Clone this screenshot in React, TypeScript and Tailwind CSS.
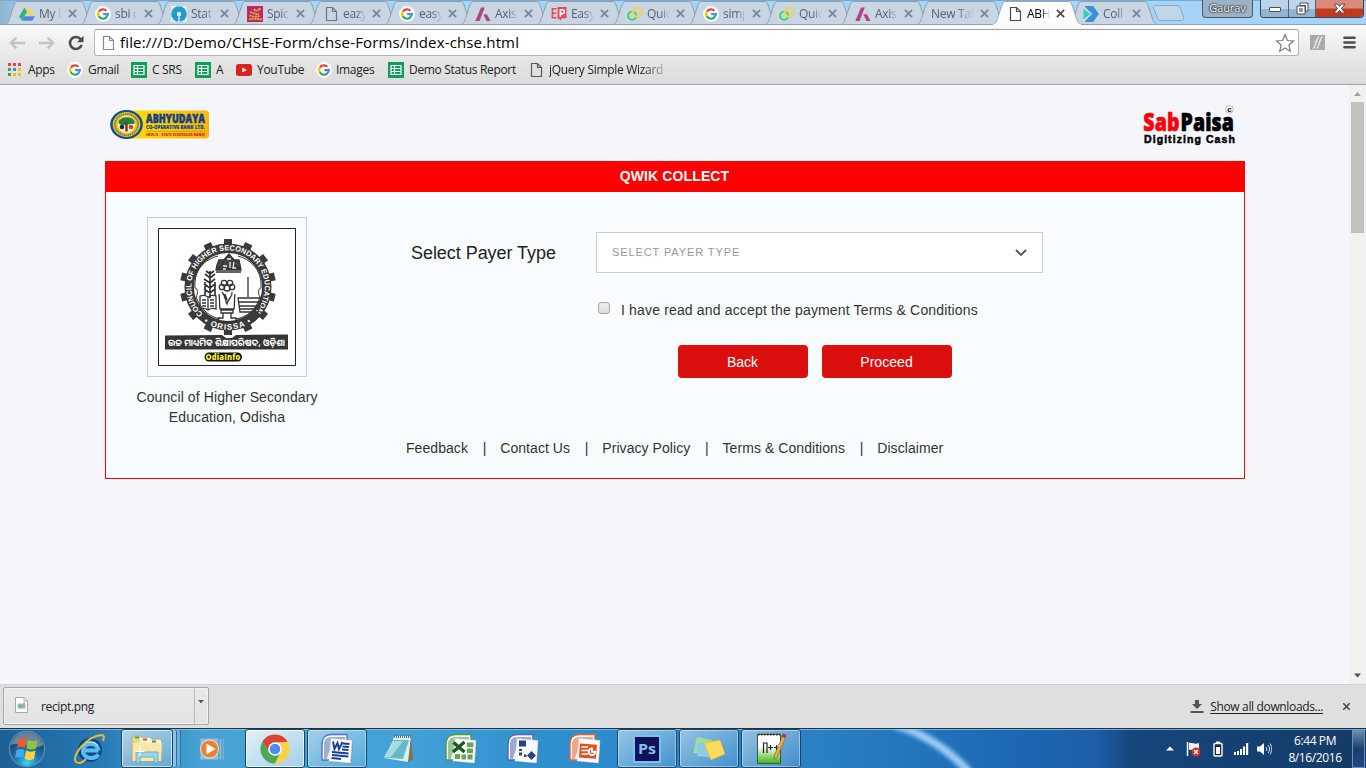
import React from "react";

type IconProps = { className?: string };

const UI = "font-['Open_Sans','Noto_Sans',sans-serif]";

/* ---------- favicons ---------- */

function DriveIcon() {
  return (
    <svg width="16" height="16" viewBox="0 0 16 16" className="opacity-80">
      <path d="M5.5 1.5h5L16 11h-5z" fill="#ffcf48" />
      <path d="M5.5 1.5 8 6 3 14.5 0 10.5z" fill="#11a861" />
      <path d="M5.3 10.2H16l-2.6 4.5H2.8z" fill="#3777e3" />
    </svg>
  );
}

function GoogleIcon() {
  return (
    <svg width="16" height="16" viewBox="0 0 16 16">
      <circle cx="8" cy="8" r="7.9" fill="#fff" />
      <g fill="none" strokeWidth="2.2">
        <path d="M11.4 4.7A4.8 4.8 0 0 0 3.9 5.6" stroke="#ea4335" />
        <path d="M3.9 5.5a4.8 4.8 0 0 0 0 5" stroke="#fbbc05" />
        <path d="M3.8 10.3a4.8 4.8 0 0 0 7.5 1.1" stroke="#34a853" />
        <path d="M11.2 11.5A4.8 4.8 0 0 0 12.8 8.2H8.2" stroke="#4285f4" />
      </g>
    </svg>
  );
}

function SbiIcon() {
  return (
    <svg width="16" height="16" viewBox="0 0 16 16">
      <path d="M0 0h16v16H0z" fill="#e4eef5" />
      <circle cx="8" cy="8" r="7.8" fill="#219dcb" />
      <circle cx="8" cy="8" r="2.2" fill="#e4eef5" />
      <path d="M7.3 9h1.4v7H7.3z" fill="#e4eef5" />
    </svg>
  );
}

function SpiceIcon() {
  return (
    <svg width="16" height="16" viewBox="0 0 16 16">
      <path d="M0 0h16v16H0z" fill="#bb2a63" />
      <g stroke="#e2b53c" strokeWidth="1.7" strokeDasharray="2.200 .5" fill="none">
        <path d="M7 3c1 2 4 2 5.500.5" />
        <path d="M3 6c2 0 5 2.500 9 2" />
        <path d="M2.500 9.500c3 1 6 1.500 10 .5" />
        <path d="M2 13.500c3-1 6-1 13 0" />
      </g>
      <circle cx="12.500" cy="3" r="1.200" fill="#e2b53c" />
    </svg>
  );
}

function PageIcon({ className = "" }: IconProps) {
  return (
    <svg width="16" height="16" viewBox="0 0 16 16" className={className}>
      <path
        d="M3.500 1.500h6l4 4v9h-10zM9.500 1.500v4h4"
        fill="none"
        stroke="currentColor"
        strokeWidth="1.200"
      />
    </svg>
  );
}

function AxisIcon() {
  return (
    <svg width="16" height="16" viewBox="0 0 16 16">
      <path d="M6 1.500h3.800L4.500 15H.3z" fill="#b3447f" />
      <path d="M8.300 8.300h3.600L15.600 15h-4.100z" fill="#b3447f" />
    </svg>
  );
}

function EpIcon() {
  return (
    <svg width="17" height="16" viewBox="0 0 17 16">
      <path d="M7 .5h9.500v12H11V15l-4-2.500z" fill="#ef4557" />
      <path d="M6 2.500H1.500v9.500H6M1.500 7.200h4" fill="none" stroke="#ef4557" strokeWidth="1.700" />
      <path d="M10 11V3.500h2.200a1.900 1.900 0 0 1 0 4H10" fill="none" stroke="#fff" strokeWidth="1.800" />
    </svg>
  );
}

function RingsIcon() {
  return (
    <svg width="17" height="16" viewBox="0 0 17 16">
      <circle cx="5.500" cy="9.800" r="4.300" fill="none" stroke="#3bd45e" strokeWidth="2" />
      <circle cx="10.800" cy="5.900" r="4.700" fill="none" stroke="#f0d44a" strokeWidth="2.200" />
    </svg>
  );
}

function CollectIcon() {
  return (
    <svg width="16" height="16" viewBox="0 0 16 16">
      <path d="M1.500 0H10l6 8-6 8H1.500L8 8z" fill="#3c8fd8" />
      <path d="M.5 2.500 7 8 .5 13.500z" fill="#36cfb5" />
      <path d="M.5 1 9 8 .5 15" fill="none" stroke="#dce8f3" strokeWidth=".9" />
    </svg>
  );
}

function SheetIcon() {
  return (
    <svg width="16" height="16" viewBox="0 0 16 16">
      <path d="M0 0h16v16H0z" fill="#0f9d58" />
      <path d="M3 3.500h10v9H3zM3 6.500h10M3 9.500h10M6.500 3.500v9" fill="none" stroke="#fff" strokeWidth="1.200" />
    </svg>
  );
}

function YouTubeIcon() {
  return (
    <svg width="16" height="16" viewBox="0 0 16 16">
      <rect x="0" y="2" width="16" height="12" rx="2.500" fill="#d8231f" />
      <path d="M6.300 5.500v5L10.800 8z" fill="#fff" />
    </svg>
  );
}

function AppsIcon() {
  const colors = ["#ea4335", "#ea4335", "#ea4335", "#34a853", "#4285f4", "#fbbc05", "#34a853", "#fbbc05", "#fbbc05"];
  return (
    <svg width="14" height="14" viewBox="0 0 14 14">
      {colors.map((c, i) => (
        <rect key={i} x={(i % 3) * 5} y={Math.floor(i / 3) * 5} width="3" height="3" fill={c} />
      ))}
    </svg>
  );
}

function CrossIcon({ className = "" }: IconProps) {
  return (
    <svg width="9" height="9" viewBox="0 0 9 9" className={className}>
      <path d="M.9.9l7.200 7.200M8.100.9.9 8.100" stroke="currentColor" strokeWidth="1.700" />
    </svg>
  );
}

/* ---------- browser chrome ---------- */

type TabData = { title: string; icon?: React.ReactNode; active?: boolean };

const tabs: TabData[] = [
  { title: "My D", icon: <DriveIcon /> },
  { title: "sbi c", icon: <GoogleIcon /> },
  { title: "Stat", icon: <SbiIcon /> },
  { title: "Spic", icon: <SpiceIcon /> },
  { title: "eazy", icon: <PageIcon className="text-[#6d757d]" /> },
  { title: "easy", icon: <GoogleIcon /> },
  { title: "Axis", icon: <AxisIcon /> },
  { title: "Easy", icon: <EpIcon /> },
  { title: "Quic", icon: <RingsIcon /> },
  { title: "simp", icon: <GoogleIcon /> },
  { title: "Quic", icon: <RingsIcon /> },
  { title: "Axis", icon: <AxisIcon /> },
  { title: "New Tab" },
  { title: "ABH", icon: <PageIcon className="text-[#4a4a4a]" />, active: true },
  { title: "Coll", icon: <CollectIcon /> },
];

function Tab({ title, icon, active }: TabData) {
  return (
    <div className={`relative h-[25px] w-[76px] shrink-0 ${active ? "z-10" : ""}`}>
      <svg width="86" height="25" viewBox="0 0 86 25" className="absolute left-0 top-0 overflow-visible">
        <path
          d="M-.5 24.500C3 24 3.500 21 5 17L9 5C10 2 11 1.500 13 1.500h62c2 0 3 .5 4 3.500l4 12c1.500 4 2 7 5.500 7.500z"
          fill={active ? "#fcfcfc" : "#c8d6e4"}
          stroke={active ? "#9aa9b8" : "#8e9fb1"}
          strokeWidth="1"
        />
        {active && <path d="M0 25.500h88V24H0z" fill="#fbfbfb" />}
      </svg>
      <div className="relative flex h-full items-center pl-[14px] pt-[2px]">
        {icon && <span className="mr-[4px] flex w-[16px] shrink-0">{icon}</span>}
        <span
          className={`${icon ? "w-[23px]" : "w-[43px]"} shrink-0 overflow-hidden whitespace-nowrap text-[12px] tracking-[-0.3px] [mask-image:linear-gradient(to_right,black_60%,transparent)] ${
            active ? "text-black" : "text-[#59626b]"
          }`}
        >
          {title}
        </span>
        <CrossIcon className={`ml-[6px] shrink-0 ${active ? "text-[#4c4c4c]" : "text-[#7a848f]"}`} />
      </div>
    </div>
  );
}

function WindowControls() {
  return (
    <div className="ml-auto flex items-start">
      <div className="mr-[7px] flex h-[18px] w-[51px] items-center justify-center rounded-b-[4px] border border-t-0 border-[#47586a] bg-[#9bb1c6] text-[11px] tracking-[-0.1px] text-white [text-shadow:0_0_2px_#222,0_0_2px_#222,0_0_1px_#222]">
        Gaurav
      </div>
      <div className="mr-[2px] flex h-[18px] overflow-hidden rounded-b-[4px] border border-t-0 border-[#33485c]">
        <div className="flex w-[28px] items-center justify-center border-r border-[#4d6479] bg-linear-to-b from-[#bdd5ea] from-50% to-[#93b3cf] to-55%">
          <svg width="14" height="8" viewBox="0 0 14 8"><rect x="1.500" y="2.500" width="11" height="4" rx=".5" fill="#fff" stroke="#48525d" /></svg>
        </div>
        <div className="flex w-[27px] items-center justify-center border-r border-[#4d6479] bg-linear-to-b from-[#bdd5ea] from-50% to-[#93b3cf] to-55%">
          <svg width="13" height="13" viewBox="0 0 13 13">
            <path d="M4 1h8v8H9.500V3.500H4z" fill="#fff" stroke="#48525d" />
            <path d="M1 4h8v8H1z" fill="#fff" stroke="#48525d" />
            <path d="M3.700 6.700h2.600v2.600H3.700z" fill="#9fbad2" stroke="#48525d" strokeWidth=".8" />
          </svg>
        </div>
        <div className="flex w-[47px] items-center justify-center bg-linear-to-b from-[#d98a7a] from-45% to-[#c13a20] to-55%">
          <svg width="13" height="11" viewBox="0 0 13 11">
            <path d="M1 1h3.500l2 2.500L8.500 1H12L8.500 5.500 12 10H8.500l-2-2.500-2 2.500H1l3.500-4.500z" fill="#fff" stroke="#5a4648" />
          </svg>
        </div>
      </div>
    </div>
  );
}

function TabStrip() {
  return (
    <div className="flex h-[25px] shrink-0 border-b border-[#8e9fb1] bg-linear-to-r from-[#8fb6cf] to-[#a6d3f8] to-3% pl-[5px] shadow-[inset_0_1px_0_#79aad4]">
      {tabs.map((t, i) => (
        <Tab key={i} {...t} />
      ))}
      <svg width="36" height="25" viewBox="0 0 36 25" className="ml-[5px] overflow-visible">
        <path d="M5 5.500h22c2 0 3 1 3.500 2.500l3 9c.7 2-.2 3.500-2 3.500H11c-2 0-3-1-3.700-3L3.500 8C3 6.500 3.500 5.500 5 5.500z" fill="#bfd5ea" stroke="#8fa6bd" />
      </svg>
      <WindowControls />
    </div>
  );
}

function Toolbar() {
  return (
    <div className="flex h-[32px] shrink-0 items-center bg-linear-to-b from-[#fafafa] to-[#e7e7e7] pt-[3px]">
      <svg width="16" height="14" viewBox="0 0 16 14" className="ml-[9px]">
        <path d="M7.500 1.500 2 7l5.500 5.500M2 7h14" fill="none" stroke="#c3c3c3" strokeWidth="2.400" />
      </svg>
      <svg width="16" height="14" viewBox="0 0 16 14" className="ml-[14px]">
        <path d="M8.500 1.500 14 7l-5.500 5.500M14 7H0" fill="none" stroke="#c3c3c3" strokeWidth="2.400" />
      </svg>
      <svg width="16" height="16" viewBox="0 0 16 16" className="ml-[13px]">
        <path d="M12.800 4.400A6 6 0 1 0 13.600 10" fill="none" stroke="#4c4c4c" strokeWidth="2.600" />
        <path d="M15.500.8v6.400H9z" fill="#4c4c4c" />
      </svg>
      <div className="ml-[10px] flex h-[27px] w-[1205px] items-center rounded-[3px] border border-[#b5b5b5] border-t-[#a0a0a0] bg-white pl-[5px] pr-[3px]">
        <PageIcon className="text-[#8a8a8a]" />
        <span className="ml-[4px] text-[15px] leading-none tracking-[0.15px] text-black">
          file:///D:/Demo/CHSE-Form/chse-Forms/index-chse.html
        </span>
        <svg width="20" height="20" viewBox="0 0 20 20" className="ml-auto">
          <path d="M10 1.800l2.400 5.700 6.100.5-4.600 4 1.400 6.200-5.300-3.300-5.300 3.300 1.400-6.200-4.600-4 6.100-.5z" fill="#fff" stroke="#7d7d7d" strokeWidth="1.200" />
        </svg>
      </div>
      <svg width="15" height="15" viewBox="0 0 15 15" className="ml-[11px]">
        <path d="M0 0h15v15H0z" fill="#a9a9a9" />
        <path d="M3 13.500C6 12 5.500 4 9 1.500M6.500 13.500C9.500 12 9 4 12.500 1.500" fill="none" stroke="#f6f6f6" strokeWidth="1.100" />
        <path d="M4 6.300h8M3.500 9h7.500" stroke="#d5d5d5" strokeWidth=".7" />
      </svg>
      <svg width="13" height="13" viewBox="0 0 13 13" className="ml-[18px]">
        <path d="M1.500 1.700h10M1.500 6.500h10M1.500 11.300h10" stroke="#4c4c4c" strokeWidth="2.600" strokeLinecap="round" />
      </svg>
    </div>
  );
}

function BookmarksBar() {
  return (
    <div className="flex h-[28px] shrink-0 items-center border-b border-[#a3a3a3] bg-linear-to-b from-[#e6e6e6] to-[#dcdcdc] pb-px pl-[8px] text-[12px] tracking-[-0.3px] text-[#222]">
      <AppsIcon />
      <span className="ml-[6px] w-[39px]">Apps</span>
      <GoogleIcon />
      <span className="ml-[5px] w-[43px]">Gmail</span>
      <SheetIcon />
      <span className="ml-[5px] w-[43px]">C SRS</span>
      <SheetIcon />
      <span className="ml-[5px] w-[20px]">A</span>
      <YouTubeIcon />
      <span className="ml-[5px] w-[59px] tracking-[-0.3px]">YouTube</span>
      <GoogleIcon />
      <span className="ml-[4px] w-[52px]">Images</span>
      <SheetIcon />
      <span className="ml-[5px] w-[119px] whitespace-nowrap tracking-[-0.33px]">Demo Status Report</span>
      <PageIcon className="text-[#5a5a5a]" />
      <span className="ml-[5px] w-[116px] overflow-hidden whitespace-nowrap [mask-image:linear-gradient(to_right,black_80%,rgba(0,0,0,.25))]">
        jQuery Simple Wizard
      </span>
    </div>
  );
}

/* ---------- web page ---------- */

function BankLogo() {
  return (
    <svg width="100" height="30" viewBox="0 0 100 30">
      <defs>
        <linearGradient id="gold" x1="0" y1="0" x2="1" y2="0">
          <stop offset="0" stopColor="#ffe100" />
          <stop offset="1" stopColor="#f7b515" />
        </linearGradient>
      </defs>
      <rect x="14" y=".5" width="85" height="28" rx="3.500" fill="url(#gold)" />
      <ellipse cx="16.500" cy="14.500" rx="16.300" ry="14.500" fill="#0d4c9b" />
      <ellipse cx="16.500" cy="14.500" rx="13.800" ry="12.400" fill="#e9c522" />
      <ellipse cx="16.500" cy="14.500" rx="11.500" ry="10.600" fill="none" stroke="#6f7045" strokeWidth="1.800" strokeDasharray="1.300 .8" />
      <ellipse cx="16.500" cy="14.500" rx="8.800" ry="8.500" fill="#f1ead4" />
      <path d="M8.500 12.500c0-6 14-7.500 16-1 1 3-2 3-3 2-2 2-4 0-5 1-2 1-7 1-8-2z" fill="#22803b" />
      <path d="M15.300 12h2.400v9.500h-2.400z" fill="#6b3a1d" />
      <circle cx="12" cy="17" r="2.300" fill="#2a2a2a" />
      <circle cx="21" cy="17" r="2.300" fill="#b9522b" />
      <g fontFamily="Open Sans, sans-serif" fontWeight="800">
        <text x="36" y="12.600" fontSize="12" fill="#123f8c" stroke="#123f8c" strokeWidth=".6" textLength="59" lengthAdjust="spacingAndGlyphs">ABHYUDAYA</text>
        <text x="36" y="18.900" fontSize="5.200" fill="#123f8c" stroke="#123f8c" strokeWidth=".15" textLength="59" lengthAdjust="spacingAndGlyphs">CO-OPERATIVE BANK LTD.</text>
        <text x="36" y="26.200" fontSize="4.200" fill="#d8241c" stroke="#d8241c" strokeWidth=".1" textLength="59" lengthAdjust="spacingAndGlyphs">(MULTI - STATE SCHEDULED BANK)</text>
      </g>
      <path d="M36 21.200h59" stroke="#a39a2e" strokeWidth=".7" />
    </svg>
  );
}

function SabPaisaLogo() {
  return (
    <svg width="96" height="44" viewBox="0 0 96 44">
      <g fontFamily="Open Sans, sans-serif" fontWeight="800" fontSize="25.500">
        <text x="1.300" y="28.300" fill="#fb0007" stroke="#fb0007" strokeWidth=".7" textLength="36.500" lengthAdjust="spacingAndGlyphs">Sab</text>
        <text x="38.500" y="28.300" fill="#000" stroke="#000" strokeWidth=".7" textLength="53.500" lengthAdjust="spacingAndGlyphs">Paisa</text>
      </g>
      <text x="2" y="40.300" fontFamily="Liberation Sans, sans-serif" fontWeight="700" fontSize="10.500" stroke="#000" strokeWidth=".5" textLength="91" lengthAdjust="spacing">Digitizing Cash</text>
      <circle cx="87.500" cy="6.300" r="3.800" fill="#fff" stroke="#888" strokeWidth=".6" />
      <text x="85.200" y="8.900" fontFamily="Liberation Sans, sans-serif" fontWeight="700" fontSize="8">c</text>
    </svg>
  );
}

function CouncilSeal() {
  const teeth = Array.from({ length: 14 }, (_, i) => (i * 360) / 14);
  return (
    <svg width="138" height="138" viewBox="0 0 138 138" fill="none">
      <path d="M.5.5h137v137H.5z" fill="#fff" stroke="#222" />
      {teeth.map((a) => (
        <path key={a} d="M66 11h8v10h-8z" fill="#3a3a3a" transform={`rotate(${a} 70 59)`} />
      ))}
      <circle cx="70" cy="59" r="38.800" fill="#fff" stroke="#3a3a3a" strokeWidth="9.500" />
      <path d="M60 28C42 33 36 46 37 60c3 0 3 6 1 9 5 13 14 20 24 22M80 28c17 5 24 18 23 32-3 0-3 6-1 9-4 13-13 20-24 22" stroke="#333" strokeWidth="1" />
      <defs>
        <path id="sealTop" d="M44.200 86.500A37.700 37.700 0 1 1 95.800 86.500" />
        <path id="sealBottom" d="M42 90.500A42.200 42.200 0 0 0 98 90.500" />
      </defs>
      <g fontFamily="Liberation Sans, sans-serif" fontWeight="700" fill="#fff">
        <text fontSize="7.600" dy="1"><textPath href="#sealTop" startOffset="0" textLength="176" lengthAdjust="spacingAndGlyphs">COUNCIL OF HIGHER SECONDARY EDUCATION</textPath></text>
        <text fontSize="8" dy=".5"><textPath href="#sealBottom" startOffset="5" textLength="50">• ORISSA •</textPath></text>
      </g>
      <g stroke="#333" strokeWidth="1.300">
        <path d="M61 32h20l1 5 1 5H58l1-5zM58 42l4-3h17l4 3M58 44h25" fill="#444" />
        <path d="M65 33l6-7 6 7v8H65z" fill="#444" />
        <path d="M65 38h4M65 41h3M72 34v6M76 34l-1 6h3M69 31h4" stroke="#eee" />
        <path d="M52 43v27M47 46l5 4 5-4M46 51l6 4 5-4M46 56l6 4 5-4M46 61l6 4 5-4M48 43l4 3 4-3M47 54v14M57 54v14" strokeWidth="1.700" />
        <path d="M42 68c3-1 5-1 8 1 3-2 5-2 8-1v13c-3-1-5-1-8 1-3-2-5-2-8-1zM50 69v13M44 72h4M44 75h4M44 78h4M52 72h4M52 75h4M52 78h4" />
        <circle cx="69" cy="60" r="3" />
        <circle cx="64" cy="59" r="2.700" />
        <circle cx="74" cy="59" r="2.700" />
        <circle cx="66" cy="55" r="2.700" />
        <circle cx="72" cy="55" r="2.700" />
        <path d="M61 66c1 5 0 8 1 15h14c1-7 0-10 1-15M64 64c4 4 3 9 5 12 1-6 6-7 5-12M67 66l2 6M63 82h12v3H63zM65 85v5H60v4h18v-4h-5v-5" />
        <path d="M90 49v20M80 70h24l-4 14H82zM81 74h21M81 78h20M82 81h18" />
      </g>
      <path d="M7 107.500 64 107l4 3h6l4-3 52-.5v15H7z" fill="#353535" />
      <text
        x="10"
        y="118"
        fontFamily="Noto Sans Oriya, Noto Sans, sans-serif"
        fontWeight="700"
        fontSize="9.500"
        fill="#fff"
        textLength="117"
        lengthAdjust="spacingAndGlyphs"
      >
        ଉଚ୍ଚ ମାଧ୍ୟମିକ ଶିକ୍ଷାପରିଷଦ, ଓଡ଼ିଶା
      </text>
      <rect x="46.500" y="124.500" width="37.500" height="9" rx="4.500" fill="#111" />
      <text x="47.500" y="131.900" fontFamily="Open Sans, sans-serif" fontWeight="800" fontSize="8" fill="#f4ee24" textLength="35" lengthAdjust="spacingAndGlyphs">OdiaInfo</text>
    </svg>
  );
}

const footerLinks = ["Feedback", "Contact Us", "Privacy Policy", "Terms & Conditions", "Disclaimer"];

function PaymentPage() {
  return (
    <main className="flex-1 overflow-hidden pl-[105px] font-['Liberation_Sans',Arial,sans-serif] text-[14px] leading-[20px] tracking-[0.16px] text-[#333]">
      <header className="flex h-[76px] w-[1140px] justify-between">
        <div className="pl-[5px] pt-[25px]"><BankLogo /></div>
        <div className="pr-[7px] pt-[18px]"><SabPaisaLogo /></div>
      </header>
      <section className="h-[318px] w-[1140px] border border-[#f00] bg-[#f9fcff]">
        <h1 className="h-[30px] bg-[#f00] pr-px text-center font-bold leading-[29px] tracking-[0.12px] text-white">QWIK COLLECT</h1>
        <div className="flex pt-[25px]">
          <aside className="flex w-[242px] flex-col items-center text-center">
            <div className="border border-[#ccc] p-[10px]"><CouncilSeal /></div>
            <p className="mt-[10px] w-[200px] tracking-[0.11px]">Council of Higher Secondary Education, Odisha</p>
          </aside>
          <form className="pl-[62px] pt-[15px]">
            <div className="flex items-center">
              <label className="w-[186px] pl-px text-[18px] tracking-[-0.05px] text-[#222]">Select Payer Type</label>
              <div className="flex h-[41px] w-[447px] items-center justify-between border border-[#ccc] bg-white pl-[15px] pr-[15px]">
                <span className="-mt-[2px] text-[11px] tracking-[0.9px] text-[#999]">SELECT PAYER TYPE</span>
                <svg width="12" height="8" viewBox="0 0 12 8"><path d="M1 1l5 5 5-5" fill="none" stroke="#555" strokeWidth="1.800" /></svg>
              </div>
            </div>
            <div className="mt-[27px] flex pl-[188px]">
              <span className="mt-[2px] h-[12px] w-[12px] rounded-[3px] border border-[#a8a8a8] bg-linear-to-b from-[#eee] to-[#dcdcdc]" />
              <span className="ml-[11px] text-[#333]">I have read and accept the payment Terms &amp; Conditions</span>
            </div>
            <div className="mt-[25px] flex gap-[14px] pl-[268px] text-white">
              <button type="button" className="h-[33px] w-[130px] rounded-[4px] bg-[#dc0f0f] pr-px pt-px tracking-normal">Back</button>
              <button type="button" className="h-[33px] w-[130px] rounded-[4px] bg-[#dc0f0f] pr-px pt-px tracking-[0.05px]">Proceed</button>
            </div>
          </form>
        </div>
        <nav className="mt-[11px] flex pl-[300px] tracking-[0.06px]">
          {footerLinks.map((link, i) => (
            <React.Fragment key={link}>
              {i > 0 && <span className="w-[32.250px] pl-px text-center">|</span>}
              <span>{link}</span>
            </React.Fragment>
          ))}
        </nav>
      </section>
    </main>
  );
}

function Scrollbar() {
  return (
    <div className="flex w-[17px] flex-col items-center bg-[#f1f1f1]">
      <svg width="17" height="17" viewBox="0 0 17 17"><path d="M5 11h7L8.500 7z" fill="#a3a3a3" /></svg>
      <div className="h-[131px] w-[13px] bg-[#c1c1c1]" />
      <svg width="17" height="17" viewBox="0 0 17 17" className="mt-auto"><path d="M5 6.500h7l-3.500 4z" fill="#505050" /></svg>
    </div>
  );
}

function DownloadShelf() {
  return (
    <div className="flex h-[44px] shrink-0 items-center border-t border-[#cfd1d2] bg-[#dfdfdf] pl-[3px] text-[12px] text-[#222]">
      <div className="mb-px flex h-[38px] w-[206px] rounded-[2px] border border-[#a5a5a5] bg-linear-to-b from-[#e9e9e9] to-[#e2e2e2] shadow-[inset_0_0_0_1px_#f2f2f2]">
        <div className="flex w-[191px] items-center border-r border-[#bbb] pl-[11px]">
          <svg width="13" height="16" viewBox="0 0 13 16" className="-mt-[2px]">
            <path d="M.5.5h8.500l3.500 3.500v11.500H.5z" fill="#fff" stroke="#a8a8a8" />
            <path d="M9 .5V4h3.500" fill="#eee" stroke="#a8a8a8" />
            <path d="M2 6.500h9v5.500H2z" fill="#d4e8f0" />
            <circle cx="5.500" cy="9" r="2.600" fill="#74bdc9" />
            <path d="M8 5.500h2v6H8z" fill="#e29a6a" />
            <path d="M4 8.500l3 2" stroke="#6b9d54" />
          </svg>
          <span className="ml-[13px] mt-[2px] tracking-[-0.35px]">recipt.png</span>
        </div>
        <svg width="12" height="26" viewBox="0 0 12 26"><path d="M3 12h6l-3 3.300z" fill="#555" /></svg>
      </div>
      <svg width="14" height="13" viewBox="0 0 14 13" className="ml-auto">
        <path d="M5 0h4v4h3L7 9 2 4h3zM.5 11h13v2H.5z" fill="#555" />
      </svg>
      <span className="ml-[6px] mt-px tracking-[-0.35px] underline underline-offset-2">Show all downloads...</span>
      <CrossIcon className="ml-[19px] mr-[15px] scale-90 text-[#444]" />
    </div>
  );
}

/* ---------- taskbar ---------- */

function StartOrb() {
  return (
    <svg width="38" height="38" viewBox="0 0 38 38">
      <defs>
        <radialGradient id="orb" cx=".5" cy=".9" r=".75">
          <stop offset="0" stopColor="#37d5f7" />
          <stop offset=".45" stopColor="#1c77b4" />
          <stop offset="1" stopColor="#1c3f63" />
        </radialGradient>
      </defs>
      <circle cx="19" cy="19" r="17.500" fill="url(#orb)" stroke="#5d8fae" strokeWidth="1.300" />
      <path d="M3 15A16.500 16.500 0 0 1 35 15C27 21 11 10 3 15z" fill="#fff" opacity=".35" />
      <path d="M11 9c3-1.500 5-1.500 7.500 0L17 18c-3-1.500-5-1.500-8 0z" fill="#ee5a24" />
      <path d="M20 10c3 1.500 6 1.500 9.500 0L28 18.500c-3 1.500-6 1.500-9.500 0z" fill="#8cc63f" />
      <path d="M8.500 20c3-1.500 5-1.500 8 0L15 28c-3-1.500-5-1.500-8 0z" fill="#3fa9f5" />
      <path d="M18 20.500c3 1.500 6 1.500 9.500 0L26 29c-3 1.500-6 1.500-9.500 0z" fill="#fdd33c" />
    </svg>
  );
}

function IeIcon() {
  return (
    <svg width="34" height="34" viewBox="0 0 34 34">
      <circle cx="18" cy="18" r="12" fill="#0c4a87" />
      <path d="M11 18.500h15.500M26.500 22.500a9 9 0 0 1-15.500-2C10 10 25 9 26.500 18.500" fill="none" stroke="#59bdf2" strokeWidth="4" />
      <path d="M11 14c3-5 11-6 15 0" fill="none" stroke="#c8edff" strokeWidth="1.200" />
      <path d="M4 30C-1 24 14 5 29 3c4 0 3 2 2 6M4 30c3 2 7 0 10-3" fill="none" stroke="#e9b933" strokeWidth="2" />
    </svg>
  );
}

function ExplorerIcon() {
  return (
    <svg width="32" height="30" viewBox="0 0 32 30">
      <path d="M1 4l2-2h7l2 3h18v22H1z" fill="#eed68a" stroke="#c09d45" strokeWidth=".6" />
      <path d="M9 4h10l2 2h9v3H9z" fill="#fff5cf" />
      <path d="M4 2.500h4v2H4z" fill="#2fb64a" />
      <path d="M12 4.500h4v2h-4z" fill="#d54c3c" />
      <path d="M21 6.500h4v2h-4z" fill="#3d7fe0" />
      <path d="M2 9h29l-1 18H2z" fill="#f9e7a8" />
      <path d="M5 18h22v11h-4v-6H9v6H5z" fill="#9fd5ea" stroke="#5b9fc0" strokeWidth=".8" />
      <path d="M9 13v9M4.500 17.500h9" stroke="#fff" strokeWidth="1" />
    </svg>
  );
}

function MediaIcon() {
  return (
    <svg width="30" height="26" viewBox="0 0 30 26">
      <path d="M2 2h24v22H2z" fill="#8cc4e2" stroke="#5a9dc5" />
      <path d="M21 2v22M24 2v22" stroke="#3d86b6" />
      <circle cx="11.500" cy="13" r="9" fill="#f0802a" stroke="#d9e9f2" />
      <path d="M8.500 7.500v11l9-5.500z" fill="#fff" />
    </svg>
  );
}

function ChromeIcon() {
  return (
    <svg width="30" height="30" viewBox="0 0 30 30">
      <circle cx="15" cy="15" r="14.500" fill="#fbd24a" />
      <path d="M2.440 7.750A14.500 14.500 0 0 1 27.560 7.750L15 8.500 9.400 18.300z" fill="#db4437" />
      <path d="M2.440 7.750A14.500 14.500 0 0 0 15 29.500L20.700 18.200 9.400 18.300z" fill="#4ba85a" />
      <path d="M27.560 7.750A14.500 14.500 0 0 1 15 29.500l5.700-11.300L20 8.500h7.900z" fill="#fbd24a" />
      <circle cx="15" cy="15" r="6.800" fill="#fff" />
      <circle cx="15" cy="15" r="5.300" fill="#4c8bf5" />
    </svg>
  );
}

function OfficeIcon({ color, children }: { color: string; children: React.ReactNode }) {
  return (
    <svg width="32" height="32" viewBox="0 0 32 32">
      <path d="M1 27V12C1 5 4 1.500 11 1.500h15V10L9 27z" fill="#f6f9fd" stroke={color} strokeWidth="1.400" />
      <path d="M3 26V12c0-5 2-8 8-8h13v3C14 9 8 15 6 26z" fill={color} opacity=".55" />
      <path d="M11 6.500 32 8.500 30.500 31 9 29z" fill="#3c5a78" opacity=".3" />
      <path d="M10 5.500 31 7.500 29.500 30 8 28z" fill="#fcfdff" stroke="#d3dae5" strokeWidth=".5" />
      {children}
    </svg>
  );
}

function WordIcon() {
  return (
    <OfficeIcon color="#5673b8">
      <path d="M12 8.500l1.500 7.500 3-6 1.500 6L21.500 9" fill="none" stroke="#1d3f93" strokeWidth="2" />
      <path d="M22 10.500l6.500.5M21.500 13.500l6.500.5M21 16.500l6.500.5M11 19l16.500 1.500M11 22l16.300 1.500M10.500 25l9.500 1" stroke="#1d3f93" strokeWidth="1.900" />
    </OfficeIcon>
  );
}

function ExcelIcon() {
  return (
    <OfficeIcon color="#4b9a3d">
      <path d="M22 9.500h6.500V14H22zM22 15.500h6V20h-6zM10 21h5v5h-5zM16.500 21.500H21v5h-4.500zM22.500 21.500h5v5h-5z" fill="#65a653" />
      <path d="M8.500 9.500l11 9.500M19.500 9 8 19" stroke="#17591b" strokeWidth="3.200" />
    </OfficeIcon>
  );
}

function VisioIcon() {
  return (
    <OfficeIcon color="#5366ad">
      <path d="M12 7.500h7v6h-7zM12 16h3v2h-3zM12 19.500h3v3h-3zM17 21.500h2.500V24H17zM24.500 18l4.500 4.500-4.500 4.500-4.500-4.500z" fill="#27408f" />
    </OfficeIcon>
  );
}

function PowerPointIcon() {
  return (
    <OfficeIcon color="#e2622f">
      <path d="M11 10.500l17 1.300-1 14L10 24.500z" fill="#e4501b" />
      <path d="M12.500 14h6.500M12.500 17.500H19M12.500 21H19" stroke="#fff" strokeWidth="1.700" />
      <path d="M23 15.500a3.300 3.300 0 1 0 3.300 3.300H23z" fill="#e4501b" stroke="#fff" strokeWidth="1.900" />
    </OfficeIcon>
  );
}

function NotepadIcon() {
  return (
    <svg width="32" height="30" viewBox="0 0 32 30">
      <path d="M28 4l2 21-6 4-3-5z" fill="#84704f" />
      <path d="M11 2h17l-3 26L1 24C6 18 9 10 11 2z" fill="#d9eef0" />
      <path d="M10 6h16l-6 19L1 23.500C6 18 9 13 10 6z" fill="#65b9c8" />
      <path d="M10 7l10 0-12 16-7 0z" fill="#d1f0f3" opacity=".6" />
      <path d="M11 2.500h18" stroke="#5b6b70" strokeWidth="3" strokeDasharray="1 1" />
    </svg>
  );
}

function PhotoshopIcon() {
  return (
    <svg width="28" height="28" viewBox="0 0 28 28">
      <path d="M1 1h26v26H1z" fill="#111257" stroke="#7ebff0" strokeWidth="2" />
      <text x="5" y="19" fontFamily="Open Sans, sans-serif" fontWeight="700" fontSize="15" fill="#80c3f3" textLength="18" lengthAdjust="spacingAndGlyphs">Ps</text>
    </svg>
  );
}

function StickyNotesIcon() {
  return (
    <svg width="34" height="26" viewBox="0 0 34 26">
      <path d="M5 1l15 3-3 15-16-2z" fill="#9bdf9a" />
      <path d="M5 7l18-1 1 16-19-2z" fill="#8ecbe6" />
      <path d="M12 7l16-3 5 14-14 6z" fill="#fadc5a" stroke="#dcb53a" strokeWidth=".6" />
    </svg>
  );
}

function NotepadPlusIcon() {
  return (
    <svg width="32" height="34" viewBox="0 0 32 34">
      <defs>
        <linearGradient id="npp" x1="0" y1="0" x2="0" y2="1">
          <stop offset=".4" stopColor="#fff" />
          <stop offset="1" stopColor="#3fb513" />
        </linearGradient>
      </defs>
      <path d="M2.500 2.500h23v29h-23z" fill="url(#npp)" stroke="#3d5a38" />
      <path d="M3 2.500h22" stroke="#333" strokeWidth="2" strokeDasharray="1.500 1.500" />
      <path d="M8.500 21V11h3.500v10M13 15.500h5M15.500 13v5M19 15.500h5M21.500 13v5" fill="none" stroke="#222" strokeWidth="1.200" />
      <path d="M28 3l3 1.500-9 21-3 2 .5-4z" fill="#edb043" stroke="#8b6320" strokeWidth=".7" />
      <path d="M28 1.500 31.500 3 30 6l-3.500-1.500z" fill="#9c3d56" />
    </svg>
  );
}

type TaskItem = { icon: React.ReactNode; state: "idle" | "open" | "active" | "stacked" };

const tasks: TaskItem[] = [
  { icon: <IeIcon />, state: "idle" },
  { icon: <ExplorerIcon />, state: "stacked" },
  { icon: <MediaIcon />, state: "idle" },
  { icon: <ChromeIcon />, state: "active" },
  { icon: <WordIcon />, state: "open" },
  { icon: <NotepadIcon />, state: "idle" },
  { icon: <ExcelIcon />, state: "idle" },
  { icon: <VisioIcon />, state: "idle" },
  { icon: <PowerPointIcon />, state: "idle" },
  { icon: <PhotoshopIcon />, state: "open" },
  { icon: <StickyNotesIcon />, state: "open" },
  { icon: <NotepadPlusIcon />, state: "open" },
];

const taskStyles: Record<TaskItem["state"], string> = {
  idle: "w-[60px]",
  open: "w-[60px] rounded-[3px] border border-[#1b4667] bg-linear-to-br from-white/50 to-white/10 shadow-[inset_0_0_0_1px_rgba(255,255,255,.4)]",
  active: "w-[60px] rounded-[3px] border border-[#1b4667] bg-linear-to-br from-white/85 to-white/50 shadow-[inset_0_0_0_1px_rgba(255,255,255,.7)]",
  stacked: "mr-[8px] w-[52px] rounded-[3px] border border-[#1b4667] bg-linear-to-br from-white/65 to-white/20 shadow-[inset_0_0_0_1px_rgba(255,255,255,.6),4px_0_0_-1px_#8fc3e3,5px_0_0_-1px_#2d6f9c,8px_0_0_-1px_#6bb0da,9px_0_0_-1px_#2d6f9c]",
};

function Tray() {
  return (
    <div className="relative ml-auto flex items-center text-white">
      <svg width="8" height="5" viewBox="0 0 8 5"><path d="M0 4.500h8L4 .5z" fill="#fff" /></svg>
      <svg width="16" height="16" viewBox="0 0 16 16" className="ml-[12px]">
        <path d="M1.500 1v14" stroke="#fff" strokeWidth="1.500" />
        <path d="M3 2c4-1 5 2 10 0v7c-4 1-6-1-10 0z" fill="#f2f5f8" />
        <circle cx="10" cy="11" r="4.500" fill="#d92d20" />
        <path d="M8 9l4 4M12 9l-4 4" stroke="#fff" strokeWidth="1.400" />
      </svg>
      <svg width="10" height="16" viewBox="0 0 10 16" className="ml-[11px]">
        <path d="M3 .5h4v2H3z" fill="#fff" />
        <rect x="1" y="2.500" width="8" height="12.500" rx="1" fill="#1a2b40" stroke="#fff" strokeWidth="1.400" />
        <path d="M3 6h4v7H3z" fill="#fff" />
      </svg>
      <svg width="15" height="12" viewBox="0 0 15 12" className="ml-[11px]">
        <path d="M0 9h2v3H0zM3 8h2v4H3zM6 6h2v6H6zM9 3.500h2V12H9zM12 0h2.200v12H12z" fill="#fff" />
      </svg>
      <svg width="15" height="14" viewBox="0 0 15 14" className="ml-[8px]">
        <path d="M0 4.500h3L7 1v12L3 9.500H0z" fill="#fff" />
        <path d="M9 5c1 1.500 1 2.500 0 4M11 3c2 2.500 2 5.500 0 8M13 1.500c2.300 3.500 2.300 7.500 0 11" fill="none" stroke="#dbe6f2" />
      </svg>
      <div className="ml-[13px] w-[60px] text-center text-[12px] leading-[17px] tracking-[-0.4px]">
        <div>6:44 PM</div>
        <div>8/16/2016</div>
      </div>
      <div className="ml-[7px] mr-px h-[38px] w-[13px] border border-[#6d8fb0] bg-linear-to-b from-[#6c8bab] via-[#1a3f6c] to-[#1a4a84]" />
    </div>
  );
}

function Taskbar() {
  return (
    <div className="relative flex h-[40px] shrink-0 overflow-hidden border-t border-[#1c3347] bg-[#2a80c4]">
      <svg width="1366" height="39" viewBox="0 0 1366 39" className="absolute left-0 top-0">
        <defs>
          <linearGradient id="sky" x1="0" y1="0" x2="1" y2="0">
            <stop offset="0" stopColor="#1c6097" />
            <stop offset=".07" stopColor="#2679b3" />
            <stop offset=".15" stopColor="#46a3d3" />
            <stop offset=".3" stopColor="#42a1d6" />
            <stop offset=".4" stopColor="#2f8fcd" />
            <stop offset=".6" stopColor="#2a80c4" />
            <stop offset=".75" stopColor="#1c66b3" />
            <stop offset=".8" stopColor="#1d5fa8" />
            <stop offset=".83" stopColor="#15467c" />
            <stop offset="1" stopColor="#143b66" />
          </linearGradient>
          <filter id="soft"><feGaussianBlur stdDeviation="2" /></filter>
        </defs>
        <path d="M0 0h1366v39H0z" fill="url(#sky)" />
        <path d="M895-4C925 5 950 22 970 44" fill="none" stroke="#9cccf5" strokeWidth="8" filter="url(#soft)" />
        <path d="M0 .5h1366" stroke="#9cc9e3" opacity=".75" />
      </svg>
      <div className="relative flex w-[59px] items-center pl-[8px]"><StartOrb /></div>
      <div className="relative flex gap-[2px]">
        {tasks.map((t, i) => (
          <div key={i} className={`flex items-center justify-center ${taskStyles[t.state]}`}>{t.icon}</div>
        ))}
      </div>
      <Tray />
    </div>
  );
}

export default function App() {
  return (
    <div className={`flex h-[768px] w-[1366px] flex-col overflow-hidden bg-[#f5f6fb] ${UI}`}>
      <TabStrip />
      <Toolbar />
      <BookmarksBar />
      <div className="flex min-h-0 flex-1">
        <PaymentPage />
        <Scrollbar />
      </div>
      <DownloadShelf />
      <Taskbar />
    </div>
  );
}
